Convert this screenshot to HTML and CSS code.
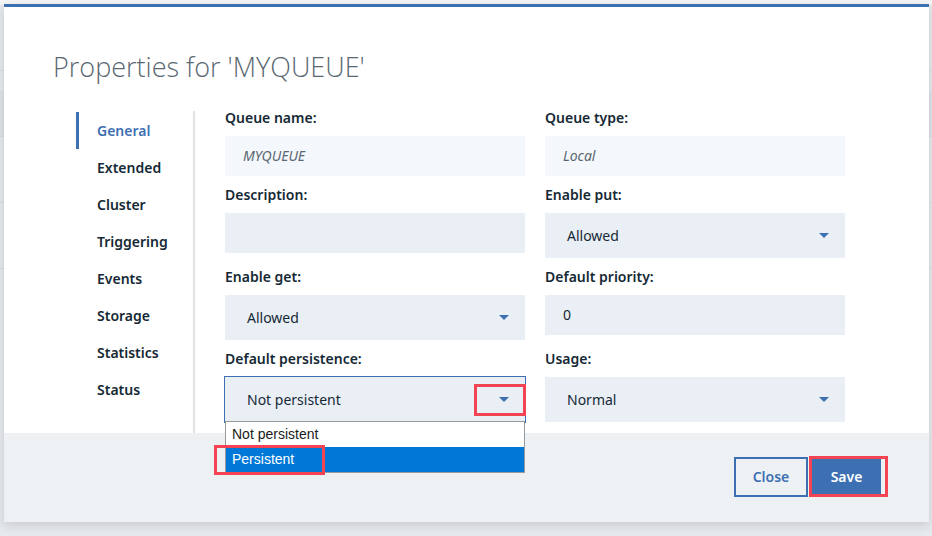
FILE: index.html
```html
<!DOCTYPE html>
<html lang="en">
<head>
<meta charset="utf-8">
<title>Properties for 'MYQUEUE'</title>
<link rel="stylesheet" href="styles.css">
</head>
<body>
<div class="page">
  <div class="page-top"></div>
  <div class="page-row"></div>
  <div class="page-row band"></div>
  <div class="page-row"></div>
  <div class="page-row"></div>
</div>

<div class="modal" role="dialog">
  <header class="modal-header">
    <h1 class="modal-title">Properties for 'MYQUEUE'</h1>
  </header>

  <div class="modal-body">
    <nav class="side-nav">
      <a class="nav-item active">General</a>
      <a class="nav-item">Extended</a>
      <a class="nav-item">Cluster</a>
      <a class="nav-item">Triggering</a>
      <a class="nav-item">Events</a>
      <a class="nav-item">Storage</a>
      <a class="nav-item">Statistics</a>
      <a class="nav-item">Status</a>
    </nav>
    <div class="divider"></div>

    <form class="form-grid">
      <div class="field">
        <label class="field-label">Queue name:</label>
        <div class="input readonly">MYQUEUE</div>
      </div>
      <div class="field">
        <label class="field-label">Queue type:</label>
        <div class="input readonly">Local</div>
      </div>

      <div class="field">
        <label class="field-label">Description:</label>
        <div class="input"></div>
      </div>
      <div class="field">
        <label class="field-label">Enable put:</label>
        <div class="select"><span>Allowed</span><svg class="caret" width="10" height="5" viewBox="0 0 10 5"><path d="M0 0h10L5 5z"/></svg></div>
      </div>

      <div class="field">
        <label class="field-label">Enable get:</label>
        <div class="select"><span>Allowed</span><svg class="caret" width="10" height="5" viewBox="0 0 10 5"><path d="M0 0h10L5 5z"/></svg></div>
      </div>
      <div class="field">
        <label class="field-label">Default priority:</label>
        <div class="input">0</div>
      </div>

      <div class="field">
        <label class="field-label">Default persistence:</label>
        <div class="select focused">
          <span>Not persistent</span><svg class="caret" width="10" height="5" viewBox="0 0 10 5"><path d="M0 0h10L5 5z"/></svg>
          <div class="mark mark-caret"></div>
          <ul class="options">
            <li class="option">Not persistent</li>
            <li class="option selected">Persistent<div class="mark mark-option"></div></li>
          </ul>
        </div>
      </div>
      <div class="field">
        <label class="field-label">Usage:</label>
        <div class="select"><span>Normal</span><svg class="caret" width="10" height="5" viewBox="0 0 10 5"><path d="M0 0h10L5 5z"/></svg></div>
      </div>
    </form>
  </div>

  <footer class="modal-footer">
    <button class="btn btn-secondary" type="button">Close</button>
    <button class="btn btn-primary" type="button">Save<span class="mark mark-save"></span></button>
  </footer>
</div>
</body>
</html>
```

FILE: styles.css
```css
* { box-sizing: border-box; }

html, body {
  margin: 0;
  padding: 0;
}

body {
  width: 932px;
  height: 536px;
  overflow: hidden;
  background: #e7eaed;
  font-family: "Noto Sans", "Open Sans", sans-serif;
  color: #152935;
  position: relative;
}

/* background page (mostly covered by the modal) */
.page {
  display: flex;
  flex-direction: column;
}
.page-top {
  height: 5px;
  background: #f3f5f7;
}
.page-row {
  height: 46px;
  margin-top: 20px;
  border-bottom: 1px solid #dadee2;
}
.page-row.band {
  background: #dee3e9;
}

/* modal */
.modal {
  position: absolute;
  left: 4px;
  top: 4px;
  width: 925px;
  height: 518px;
  display: flex;
  flex-direction: column;
  background: #ffffff;
  border-top: 3px solid #3d70b2;
  box-shadow: 0 3px 10px rgba(0, 0, 0, 0.14);
}

.modal-header {
  height: 103px;
  padding: 42px 0 0 49px;
}

.modal-title {
  margin: 0;
  font-family: "Open Sans", "Noto Sans", sans-serif;
  font-weight: 300;
  font-size: 27px;
  line-height: 36px;
  color: #5a6872;
}

.modal-body {
  height: 323px;
  display: flex;
  align-items: stretch;
}

.side-nav {
  margin-left: 72px;
  width: 117px;
  padding-top: 2px;
  display: flex;
  flex-direction: column;
}

.nav-item {
  height: 37px;
  line-height: 37px;
  padding-left: 21px;
  font-size: 14px;
  font-weight: 600;
  color: #152935;
}

.nav-item.active {
  color: #3d70b2;
  border-left: 3px solid #3d70b2;
  padding-left: 18px;
}

.divider {
  width: 2px;
  margin-top: 1px;
  background: #dfe3e6;
}

.form-grid {
  margin: 0 0 0 30px;
  display: grid;
  grid-template-columns: 300px 300px;
  column-gap: 20px;
  row-gap: 11px;
  align-content: start;
  align-items: start;
}

.field {
  display: flex;
  flex-direction: column;
}

.field-label {
  font-size: 14px;
  font-weight: 600;
  line-height: 16px;
  margin-bottom: 10px;
  color: #152935;
}

.input {
  height: 40px;
  padding: 0 18px 2px;
  display: flex;
  align-items: center;
  background: #eaeef5;
  font-size: 14px;
  color: #152935;
}

.input.readonly {
  background: #f4f7fb;
  color: #5a6872;
  font-style: italic;
}

.select {
  position: relative;
  height: 45px;
  padding: 0 16px 1px 22px;
  display: flex;
  align-items: center;
  justify-content: space-between;
  background: #eaeef5;
  font-size: 14px;
  color: #152935;
}

.select.focused {
  outline: 1px solid #3d70b2;
}

.caret {
  fill: #3d70b2;
  display: block;
}

/* native-looking dropdown list */
.options {
  position: absolute;
  left: 0;
  top: 44px;
  width: 300px;
  margin: 0;
  padding: 0;
  list-style: none;
  background: #ffffff;
  border: 1px solid #9a9a9a;
  font-family: "Liberation Sans", Arial, sans-serif;
  font-size: 14px;
  z-index: 2;
}

.option {
  position: relative;
  height: 25px;
  line-height: 25px;
  padding-left: 6px;
  color: #1a1a1a;
}

.option.selected {
  background: #0078d7;
  color: #ffffff;
}

/* red annotation boxes */
.mark {
  position: absolute;
  border: 3px solid #f24452;
  pointer-events: none;
  z-index: 3;
}

.mark-caret {
  left: 249px;
  top: 7px;
  width: 52px;
  height: 32px;
}

.mark-option {
  left: -12px;
  top: -2px;
  width: 111px;
  height: 30px;
}

.mark-save {
  left: -5px;
  top: -3px;
  width: 79px;
  height: 41px;
}

.modal-footer {
  flex: 1;
  background: #eef1f4;
  display: flex;
  justify-content: flex-end;
  align-items: flex-start;
  gap: 4px;
  padding: 24px 48px 0 0;
}

.btn {
  position: relative;
  height: 40px;
  padding: 0 14px 2px;
  font-family: "Noto Sans", "Open Sans", sans-serif;
  font-size: 14px;
  font-weight: 600;
  border: 2px solid #3d70b2;
  cursor: pointer;
}

.btn-secondary {
  width: 74px;
  background: transparent;
  color: #3d70b2;
}

.btn-primary {
  width: 69px;
  background: #3d70b2;
  color: #ffffff;
}
```
